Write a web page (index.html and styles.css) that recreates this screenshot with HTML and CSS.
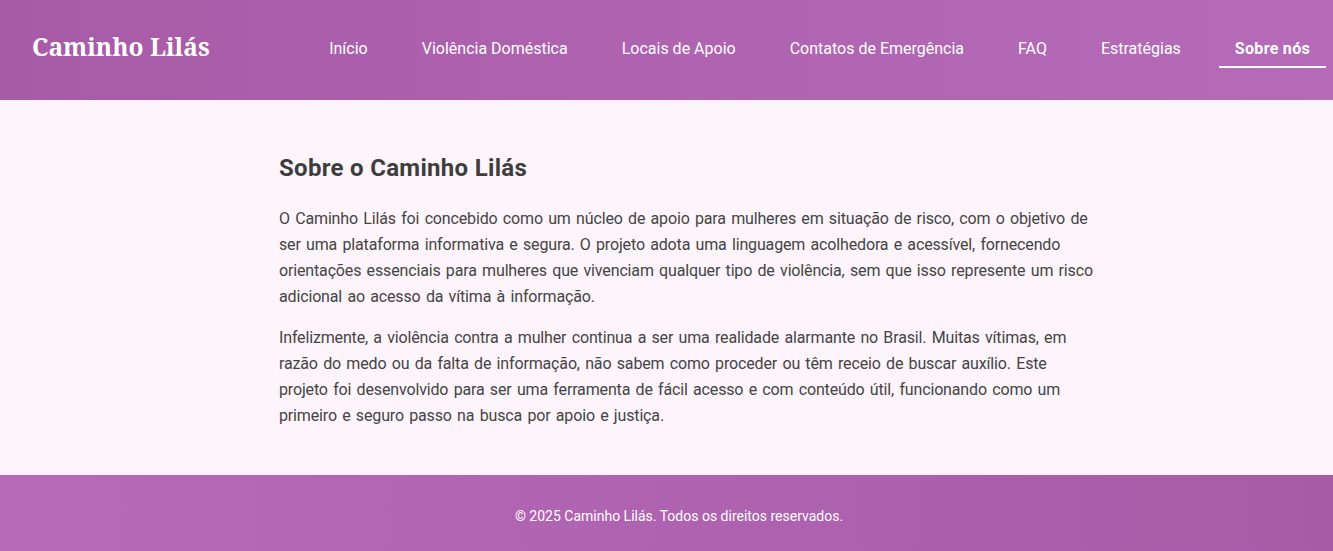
FILE: index.html
```html
<!DOCTYPE html>
<html lang="pt-BR">
<head>
<meta charset="utf-8">
<title>Sobre nós - Caminho Lilás</title>
<link rel="stylesheet" href="styles.css">
</head>
<body>
<header class="site-header">
  <div class="logo">Caminho Lilás</div>
  <nav class="main-nav">
    <a href="#" class="nav-link">Início</a>
    <a href="#" class="nav-link">Violência Doméstica</a>
    <a href="#" class="nav-link">Locais de Apoio</a>
    <a href="#" class="nav-link">Contatos de Emergência</a>
    <a href="#" class="nav-link">FAQ</a>
    <a href="#" class="nav-link">Estratégias</a>
    <a href="#" class="nav-link active">Sobre nós</a>
  </nav>
</header>
<main class="content">
  <h2 class="title">Sobre o Caminho Lilás</h2>
  <p class="text">O Caminho Lilás foi concebido como um núcleo de apoio para mulheres em situação de risco, com o objetivo de ser uma plataforma informativa e segura. O projeto adota uma linguagem acolhedora e acessível, fornecendo orientações essenciais para mulheres que vivenciam qualquer tipo de violência, sem que isso represente um risco adicional ao acesso da vítima à informação.</p>
  <p class="text">Infelizmente, a violência contra a mulher continua a ser uma realidade alarmante no Brasil. Muitas vítimas, em razão do medo ou da falta de informação, não sabem como proceder ou têm receio de buscar auxílio. Este projeto foi desenvolvido para ser uma ferramenta de fácil acesso e com conteúdo útil, funcionando como um primeiro e seguro passo na busca por apoio e justiça.</p>
</main>
<footer class="site-footer">
  <p class="copy">© 2025 Caminho Lilás. Todos os direitos reservados.</p>
</footer>
</body>
</html>
```
FILE: styles.css
```css
* { box-sizing: border-box; }
html, body { margin: 0; padding: 0; }
body {
  font-family: Roboto, "Liberation Sans", sans-serif;
  background: #fdf5fb;
  color: #444;
}
.site-header {
  height: 100px;
  display: flex;
  align-items: center;
  justify-content: space-between;
  padding: 0 7px 0 32px;
  background: linear-gradient(90deg, #a75ba7 0%, #b66bb9 100%);
}
.logo {
  font-family: "Noto Serif", Georgia, "DejaVu Serif", serif;
  font-weight: bold;
  font-size: 24.5px;
  color: #fff;
  margin-bottom: 7px;
}
.main-nav {
  display: flex;
  gap: 22px;
  margin-bottom: 2px;
}
.nav-link {
  display: block;
  color: #fff;
  text-decoration: none;
  font-size: 16px;
  line-height: 24px;
  padding: 6px 16px 5px;
  border-bottom: 2px solid transparent;
}
.nav-link.active {
  font-weight: bold;
  letter-spacing: 0.3px;
  border-bottom-color: #fff;
}
.content {
  width: 818px;
  margin: 0 0 0 calc(50% - 387.5px);
  padding: 54px 0 46px;
}
.title {
  margin: 0 0 23px;
  font-size: 24px;
  line-height: 1.2;
  font-weight: bold;
  letter-spacing: 0.3px;
  color: #3d3d3d;
}
.text {
  margin: 0 0 15px;
  font-size: 16px;
  line-height: 26px;
  letter-spacing: -0.15px;
  word-spacing: 1.5px;
}
.text:last-child { margin-bottom: 0; }
.site-footer {
  background: linear-gradient(90deg, #b66bb9 0%, #a75ba7 100%);
  padding: 30px 0 24px 25px;
  text-align: center;
  color: #fff;
}
.copy {
  margin: 0;
  font-size: 14px;
  line-height: 22px;
}
```
